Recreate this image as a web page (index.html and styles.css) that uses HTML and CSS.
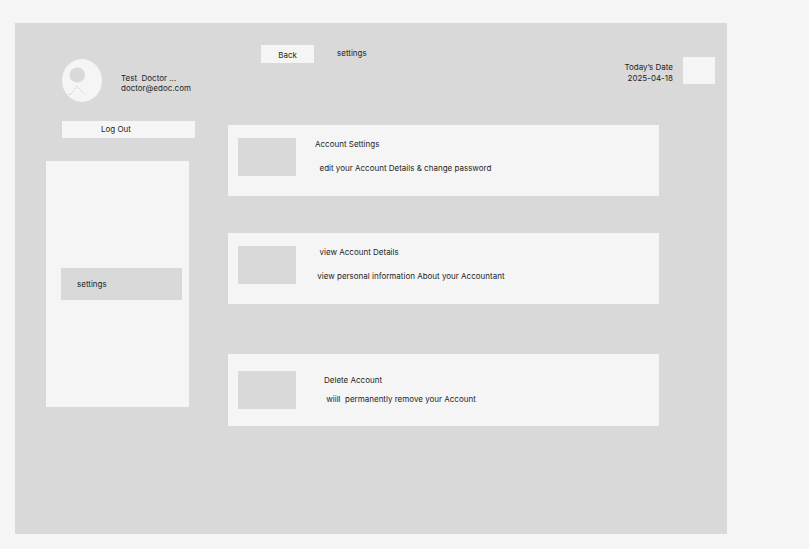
FILE: index.html
```html
<!DOCTYPE html>
<html lang="en">
<head>
<meta charset="utf-8">
<title>Settings</title>
<link rel="stylesheet" href="styles.css">
</head>
<body>
<div class="panel">
  <aside class="sidebar">
    <div class="profile">
      <svg class="avatar" viewBox="0 0 40 43" aria-hidden="true">
        <ellipse cx="20" cy="21.5" rx="20" ry="21.5" fill="#f5f5f5"/>
        <ellipse cx="15.2" cy="16" rx="7.8" ry="7.5" fill="#d9d9d9"/>
        <path d="M7 35.500H9L14 28Q15 27 16 28L22.500 35.500" fill="none" stroke="#c4c4c4" stroke-width=".8" stroke-dasharray="1.500 1.300"/>
      </svg>
      <div class="identity">
        <p>Test  Doctor ...</p>
        <p>doctor@edoc.com</p>
      </div>
    </div>
    <button class="logout" type="button">Log Out</button>
    <nav class="menu">
      <a class="menu-item" href="#settings">settings</a>
    </nav>
  </aside>
  <main class="main">
    <header class="topbar">
      <button class="back" type="button">Back</button>
      <h1 class="title">settings</h1>
      <div class="date">
        <p>Today’s Date</p>
        <p>2025-04-18</p>
      </div>
      <div class="date-icon"></div>
    </header>
    <section class="cards">
      <article class="card">
        <div class="thumb"></div>
        <div class="card-text">
          <h2>Account Settings</h2>
          <p>  edit your Account Details &amp; change password</p>
        </div>
      </article>
      <article class="card">
        <div class="thumb"></div>
        <div class="card-text">
          <h2>  view Account Details</h2>
          <p> view personal information About your Accountant</p>
        </div>
      </article>
      <article class="card card-danger">
        <div class="thumb"></div>
        <div class="card-text">
          <h2>Delete Account</h2>
          <p> wiill  permanently remove your Account</p>
        </div>
      </article>
    </section>
  </main>
</div>
</body>
</html>
```
FILE: styles.css
```css
* {
  box-sizing: border-box;
}

body {
  margin: 0;
  min-height: 100vh;
  display: flex;
  padding: 23px 82px 15px 15px;
  background: #f5f5f5;
  color: #1e1e1e;
  font: 8px/10px Inter, "Liberation Sans", sans-serif;
}

h1,
h2,
p {
  margin: 0;
  font: inherit;
  white-space: pre-wrap;
}

button {
  border: 0;
  padding: 0;
  background: #f5f5f5;
  color: inherit;
  font: inherit;
}

.panel {
  flex: 1;
  display: grid;
  grid-template-columns: 180px 1fr;
  column-gap: 33px;
  background: #d9d9d9;
}

.sidebar {
  display: flex;
  flex-direction: column;
  padding: 36px 0 0 31px;
}

.profile {
  display: flex;
  gap: 19px;
  padding-left: 16px;
}

.avatar {
  flex: none;
  width: 40px;
  height: 43px;
}

.identity {
  padding-top: 14px;
}

.logout {
  height: 17px;
  margin: 19px 0 23px 16px;
  padding: 0 0 2px 39px;
  text-align: left;
}

.menu {
  height: 246px;
  margin-right: 6px;
  padding: 107px 7px 0 15px;
  background: #f5f5f5;
}

.menu-item {
  display: block;
  padding: 11px 16px;
  background: #d9d9d9;
  color: inherit;
  text-decoration: none;
}

.topbar {
  display: flex;
  align-items: flex-start;
  height: 102px;
  padding: 22px 12px 0 33px;
}

.back {
  width: 53px;
  height: 18px;
  padding-top: 2px;
}

.title {
  padding: 3px 0 0 23px;
}

.date {
  margin-left: auto;
  padding: 17px 10px 0 0;
  line-height: 11px;
  text-align: right;
}

.date-icon {
  width: 32px;
  height: 27px;
  margin-top: 12px;
  background: #f5f5f5;
}

.cards {
  display: flex;
  flex-direction: column;
  gap: 37px;
  padding-right: 68px;
}

.card {
  display: flex;
  gap: 19px;
  min-height: 71px;
  padding: 13px 10px;
  background: #f5f5f5;
}

.thumb {
  flex: none;
  width: 58px;
  height: 38px;
  background: #d9d9d9;
}

.card-text {
  display: flex;
  flex-direction: column;
  gap: 14px;
  padding-top: 1px;
}

.card-danger {
  gap: 28px;
  min-height: 72px;
  margin-top: 13px;
  padding-top: 17px;
}

.card-danger .card-text {
  gap: 9px;
  padding-top: 4px;
}
```
